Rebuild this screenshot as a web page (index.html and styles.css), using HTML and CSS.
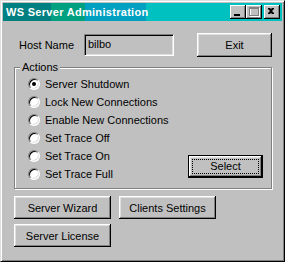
FILE: index.html
```html
<!DOCTYPE html>
<html lang="en">
  <head>
    <meta charset="UTF-8" />
    <title>WS Server Administration</title>
    <link rel="stylesheet" href="styles.css">
  </head>
  <body>
    <div class="window">
      <div class="titlebar">
        <span class="title">WS Server Administration</span>
        <div class="controls">
          <span class="ctl">
            <svg width="16" height="14" viewBox="0 0 16 14">
              <rect x="4" y="9" width="6" height="2" fill="#000" />
            </svg>
          </span>
          <span class="ctl">
            <svg width="16" height="14" viewBox="0 0 16 14">
              <rect x="4.5" y="3.5" width="9" height="8" fill="none" stroke="#fff" />
              <rect x="3.5" y="2.5" width="9" height="8" fill="none" stroke="#808080" />
              <rect x="3" y="3" width="10" height="1" fill="#808080" />
            </svg>
          </span>
          <span class="ctl close">
            <svg width="16" height="14" viewBox="0 0 16 14">
              <path d="M4 3h2l1 1h0l1-1h2v1l-2 2 2 2v1h-2l-1-1-1 1h-2v-1l2-2-2-2z" fill="#000" />
            </svg>
          </span>
        </div>
      </div>

      <div class="content">
        <div class="host-row">
          <label class="host-label">Host Name</label>
          <div class="field">bilbo</div>
          <button class="btn exit">Exit</button>
        </div>

        <div class="group">
          <span class="legend">Actions</span>
          <ul class="options">
            <li><span class="radio checked"></span>Server Shutdown</li>
            <li><span class="radio"></span>Lock New Connections</li>
            <li><span class="radio"></span>Enable New Connections</li>
            <li><span class="radio"></span>Set Trace Off</li>
            <li><span class="radio"></span>Set Trace On</li>
            <li><span class="radio"></span>Set Trace Full</li>
          </ul>
          <button class="btn default"><span class="focus">Select</span></button>
        </div>

        <div class="btn-row">
          <button class="btn wide">Server Wizard</button>
          <button class="btn wide">Clients Settings</button>
        </div>
        <div class="btn-row second">
          <button class="btn wide">Server License</button>
        </div>
      </div>
    </div>
  </body>
</html>
```

FILE: styles.css
```css
body {
  margin: 0;
  background: #c0c0c0;
  font-family: "Liberation Sans", Arial, sans-serif;
  font-size: 11px;
  color: #000;
}

.window {
  box-sizing: border-box;
  width: 285px;
  height: 262px;
  background: #c0c0c0;
  border: 1px solid;
  border-color: #dfdfdf #000 #000 #dfdfdf;
  box-shadow: inset 1px 1px #fff, inset -1px -1px #808080;
  padding: 2px;
}

.titlebar {
  height: 18px;
  display: flex;
  align-items: center;
  padding: 0 2px 0 3px;
  background: linear-gradient(
    to right,
    #008080 0 48px,
    #00a080 48px 82px,
    #00a0c0 82px 143px,
    #00c0c0 143px
  );
}

.title {
  color: #fff;
  font-weight: bold;
  font-size: 11px;
  letter-spacing: 0.3px;
}

.controls {
  margin-left: auto;
  display: flex;
}

.ctl {
  width: 16px;
  height: 14px;
  background: #c0c0c0;
  box-shadow: inset -1px -1px #000, inset 1px 1px #fff, inset -2px -2px #808080;
}

.ctl svg {
  display: block;
}

.ctl.close {
  margin-left: 2px;
}

.content {
  padding: 12px 0 0 11px;
}

.host-row {
  display: flex;
  align-items: center;
}

.host-label {
  width: 65px;
  padding-left: 5px;
}

.field {
  box-sizing: border-box;
  width: 90px;
  height: 22px;
  margin-right: 23px;
  padding: 3px 0 0 3px;
  border: 1px solid;
  border-color: #808080 #fff #fff #808080;
  box-shadow: inset 1px 1px #000, inset -1px -1px #dfdfdf;
}

.btn {
  box-sizing: border-box;
  height: 23px;
  padding: 0;
  border: none;
  background: #c0c0c0;
  font: inherit;
  color: #000;
  box-shadow: inset -1px -1px #000, inset 1px 1px #fff, inset -2px -2px #808080, inset 2px 2px #dfdfdf;
}

.btn.exit {
  width: 75px;
  height: 24px;
}

.group {
  position: relative;
  box-sizing: border-box;
  width: 258px;
  height: 122px;
  margin-top: 10px;
  padding: 7px 8px 5px 13px;
  border: 1px solid #808080;
  box-shadow: inset 1px 1px #fff, 1px 1px #fff;
  display: flex;
}

.legend {
  position: absolute;
  top: -7px;
  left: 5px;
  padding: 0 2px;
  background: #c0c0c0;
}

.options {
  list-style: none;
  margin: 0;
  padding: 0;
}

.options li {
  height: 18px;
  display: flex;
  align-items: center;
}

.radio {
  position: relative;
  box-sizing: border-box;
  width: 12px;
  height: 12px;
  margin-right: 5px;
  border-radius: 50%;
  background: #fff;
  border: 1px solid;
  border-color: #808080 #fff #fff #808080;
  box-shadow: inset 1px 1px #000, inset -1px -1px #dfdfdf;
}

.radio.checked::after {
  content: "";
  position: absolute;
  left: 3px;
  top: 3px;
  width: 4px;
  height: 4px;
  border-radius: 50%;
  background: #000;
}

.btn.default {
  width: 75px;
  margin: auto 0 5px auto;
  border: 1px solid #000;
  padding: 3px;
  box-shadow: inset -1px -1px #000, inset 1px 1px #fff, inset -2px -2px #808080, inset 2px 2px #dfdfdf;
}

.focus {
  display: block;
  height: 100%;
  box-sizing: border-box;
  border: 1px dotted #000;
  line-height: 13px;
}

.btn-row {
  display: flex;
  gap: 8px;
  margin-top: 7px;
}

.btn-row.second {
  margin-top: 5px;
}

.btn.wide {
  width: 97px;
}
```
